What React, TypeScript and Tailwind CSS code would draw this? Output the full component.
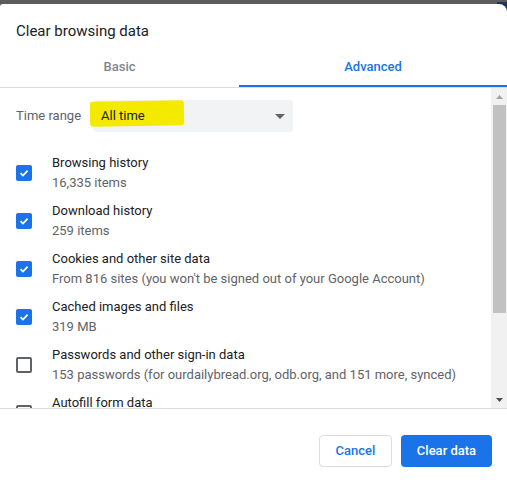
const items = [
  { label: "Browsing history", sub: "16,335 items", checked: true },
  { label: "Download history", sub: "259 items", checked: true },
  {
    label: "Cookies and other site data",
    sub: "From 816 sites (you won't be signed out of your Google Account)",
    checked: true,
  },
  { label: "Cached images and files", sub: "319 MB", checked: true },
  {
    label: "Passwords and other sign-in data",
    sub: "153 passwords (for ourdailybread.org, odb.org, and 151 more, synced)",
    checked: false,
  },
  { label: "Autofill form data", sub: "", checked: false },
];

function Checkbox({ checked }: { checked: boolean }) {
  if (checked) {
    return (
      <div className="w-4 h-4 rounded-[2px] bg-[#1a73e8] flex items-center justify-center shrink-0">
        <svg width="12" height="12" viewBox="0 0 12 12">
          <path d="M2.5 6.2 L5 8.6 L9.6 3.6" fill="none" stroke="white" strokeWidth="1.7" />
        </svg>
      </div>
    );
  }
  return <div className="w-4 h-4 rounded-[2px] border-2 border-[#5f6368] shrink-0" />;
}

export default function App() {
  return (
    <div className="w-[507px] h-[482px] bg-[#5c5c5c] pt-[4px] relative overflow-hidden font-['Roboto',sans-serif]">
      <div className="absolute right-0 top-[2px] w-[10px] h-[10px] bg-[#1d3557] rounded-bl-[4px]" />
      <div className="relative bg-white h-[478px] rounded-tl-[3px] rounded-tr-[8px] flex flex-col">
        <div className="pt-4 pb-[5px] px-4">
          <h1 className="text-[15px] leading-[22px] text-[#202124]">Clear browsing data</h1>
        </div>

        <div className="flex h-[41px] border-b border-[#dadce0]">
          <div className="w-[239px] flex items-center justify-center text-[13px] font-medium text-[#80868b]">
            Basic
          </div>
          <div className="flex-1 relative flex items-center justify-center text-[13px] font-medium text-[#1a73e8]">
            Advanced
            <div className="absolute left-0 right-0 bottom-0 h-[2px] bg-[#1a73e8]" />
          </div>
        </div>

        <div className="flex h-[321px] border-b border-[#dadce0]">
          <div className="flex-1 overflow-hidden">
            <div className="flex items-center pt-3 pl-4">
              <span className="text-[13px] text-[#5f6368] w-[77px]">Time range</span>
              <div className="relative w-[200px] h-[32px] rounded-[4px] bg-[#f1f3f4] flex items-center justify-between pl-2 pr-[8px]">
                <div className="absolute left-[-3px] top-[1px] w-[94px] h-[25px] bg-[#f4ea00] rounded-[3px] -rotate-1" />
                <span className="relative text-[13px] text-[#202124]">All time</span>
                <svg width="10" height="5" viewBox="0 0 10 5">
                  <path d="M0 0 L10 0 L5 5 Z" fill="#5f6368" />
                </svg>
              </div>
            </div>

            <div className="mt-[17px]">
              {items.map((it) => (
                <div key={it.label} className="flex items-center py-1 pl-4 h-[48px]">
                  <Checkbox checked={it.checked} />
                  <div className="ml-5 text-[13px] leading-[20px]">
                    <div className="text-[#202124]">{it.label}</div>
                    <div className="text-[#5f6368]">{it.sub || "\u00a0"}</div>
                  </div>
                </div>
              ))}
            </div>
          </div>

          <div className="w-[16px] bg-[#f1f1f1] flex flex-col items-center">
            <div className="h-[17px] flex items-center justify-center">
              <svg width="7" height="4" viewBox="0 0 7 4">
                <path d="M0 4 L7 4 L3.5 0 Z" fill="#a3a3a3" />
              </svg>
            </div>
            <div className="w-[13px] h-[208px] bg-[#c1c1c1]" />
            <div className="flex-1" />
            <div className="h-[17px] flex items-center justify-center">
              <svg width="7" height="4" viewBox="0 0 7 4">
                <path d="M0 0 L7 0 L3.5 4 Z" fill="#505050" />
              </svg>
            </div>
          </div>
        </div>

        <div className="flex justify-end gap-[9px] pt-[26px] pr-[15px]">
          <button className="h-[32px] w-[73px] rounded-[4px] border border-[#dadce0] bg-white text-[13px] font-medium text-[#1a73e8]">
            Cancel
          </button>
          <button className="h-[32px] w-[91px] rounded-[4px] bg-[#1a73e8] text-[13px] font-medium text-white">
            Clear data
          </button>
        </div>
      </div>
    </div>
  );
}
